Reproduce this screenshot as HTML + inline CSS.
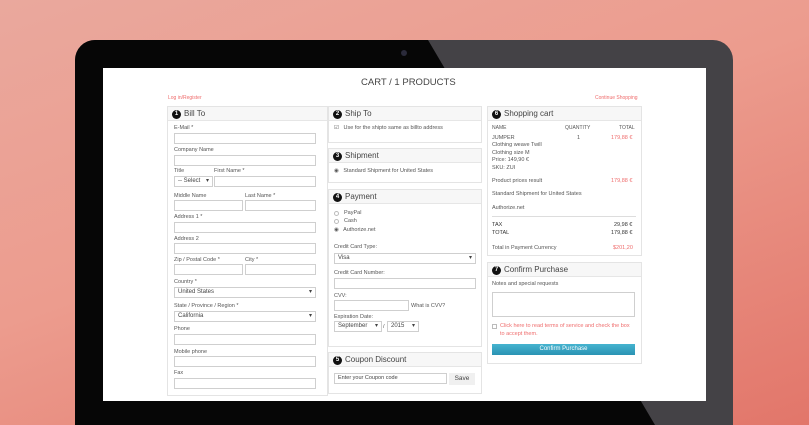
<!DOCTYPE html>
<html style="overflow:hidden;width:809px;height:425px"><head><meta charset="utf-8"><style>
*{margin:0;padding:0;box-sizing:border-box}
body{width:809px;height:425px;overflow:hidden;position:relative;font-family:"Liberation Sans",sans-serif;background:linear-gradient(160deg,#eaa89d 0%,#ec9c8e 45%,#e2766a 100%)}
.a{position:absolute}
.bez{left:75px;top:40px;width:658px;height:385px;border-radius:20px 20px 0 0;background:#444246;overflow:hidden}
.blk{left:0;top:0;width:658px;height:385px;background:#060606;clip-path:polygon(0 0,353px 0,580px 385px,0 385px)}
.scr{left:103px;top:68px;width:603px;height:333px;background:#fff}
.t{position:absolute;font-size:5.5px;color:#555;white-space:nowrap}
.box{position:absolute;border:1px solid #e4e4e4;background:#fff}
.hd{position:absolute;left:0;right:0;top:0;height:14px;background:#f7f7f7;border-bottom:1px solid #e6e6e6;font-size:8px;color:#444;line-height:14px;padding-left:16px}
.n{position:absolute;left:4px;top:2.5px;width:9px;height:9px;border-radius:50%;background:#111;color:#fff;font-size:6px;line-height:9px;text-align:center;font-weight:bold}
.in{position:absolute;border:1px solid #cfcfcf;background:#fff;height:11px;font-size:6px;color:#444;line-height:9px;padding-left:3px;overflow:hidden}
.sel::after{content:"▾";position:absolute;right:3px;top:0;font-size:6px}
.r{color:#ef6d6d}
.rd{position:absolute;width:5px;height:5px;border-radius:50%;border:1px solid #bbb}
</style></head><body>
<div class="a bez"><div class="a blk"></div></div>
<div class="a" style="left:401px;top:50px;width:6px;height:6px;border-radius:50%;background:#2a2a3a"></div>
<div class="a scr"></div>
<div class="t" style="left:361px;top:77px;font-size:9.5px;color:#444">CART / 1 PRODUCTS</div>
<div class="t r" style="left:168px;top:95px;font-size:5px">Log in/Register</div>
<div class="t r" style="left:595px;top:95px;font-size:5px">Continue Shopping</div>

<div class="box" style="left:167px;top:106px;width:161px;height:290px"><div class="hd"><span class="n">1</span>Bill To</div></div>
<div class="t" style="left:174px;top:125px">E-Mail *</div><div class="in" style="left:174px;top:133px;width:142px"></div>
<div class="t" style="left:174px;top:147px">Company Name</div><div class="in" style="left:174px;top:155px;width:142px"></div>
<div class="t" style="left:174px;top:168px">Title</div><div class="t" style="left:214px;top:168px">First Name *</div>
<div class="in sel" style="left:174px;top:176px;width:39px">-- Select</div><div class="in" style="left:214px;top:176px;width:102px"></div>
<div class="t" style="left:174px;top:193px">Middle Name</div><div class="t" style="left:245px;top:193px">Last Name *</div>
<div class="in" style="left:174px;top:200px;width:69px"></div><div class="in" style="left:245px;top:200px;width:71px"></div>
<div class="t" style="left:174px;top:214px">Address 1 *</div><div class="in" style="left:174px;top:222px;width:142px"></div>
<div class="t" style="left:174px;top:236px">Address 2</div><div class="in" style="left:174px;top:243px;width:142px"></div>
<div class="t" style="left:174px;top:257px">Zip / Postal Code *</div><div class="t" style="left:245px;top:257px">City *</div>
<div class="in" style="left:174px;top:264px;width:69px"></div><div class="in" style="left:245px;top:264px;width:71px"></div>
<div class="t" style="left:174px;top:279px">Country *</div><div class="in sel" style="left:174px;top:287px;width:142px">United States</div>
<div class="t" style="left:174px;top:303px">State / Province / Region *</div><div class="in sel" style="left:174px;top:311px;width:142px">California</div>
<div class="t" style="left:174px;top:326px">Phone</div><div class="in" style="left:174px;top:334px;width:142px"></div>
<div class="t" style="left:174px;top:349px">Mobile phone</div><div class="in" style="left:174px;top:356px;width:142px"></div>
<div class="t" style="left:174px;top:370px">Fax</div><div class="in" style="left:174px;top:378px;width:142px"></div>

<div class="box" style="left:328px;top:106px;width:154px;height:37px"><div class="hd"><span class="n">2</span>Ship To</div></div>
<div class="t" style="left:334px;top:125px">☑&nbsp;&nbsp; Use for the shipto same as billto address</div>
<div class="box" style="left:328px;top:148px;width:154px;height:35px"><div class="hd"><span class="n">3</span>Shipment</div></div>
<div class="t" style="left:334px;top:168px">◉&nbsp;&nbsp; Standard Shipment for United States</div>
<div class="box" style="left:328px;top:189px;width:154px;height:158px"><div class="hd"><span class="n">4</span>Payment</div></div>
<div class="rd" style="left:334px;top:211px"></div><div class="t" style="left:344px;top:210px">PayPal</div>
<div class="rd" style="left:334px;top:219px"></div><div class="t" style="left:344px;top:218px">Cash</div>
<div class="t" style="left:334px;top:227px">◉&nbsp;&nbsp; Authorize.net</div>
<div class="t" style="left:334px;top:244px">Credit Card Type:</div><div class="in sel" style="left:334px;top:253px;width:142px">Visa</div>
<div class="t" style="left:334px;top:270px">Credit Card Number:</div><div class="in" style="left:334px;top:278px;width:142px"></div>
<div class="t" style="left:334px;top:293px">CVV:</div><div class="in" style="left:334px;top:300px;width:75px"></div><div class="t" style="left:411px;top:303px">What is CVV?</div>
<div class="t" style="left:334px;top:314px">Expiration Date:</div>
<div class="in sel" style="left:334px;top:321px;width:48px">September</div><div class="t" style="left:383px;top:324px">/</div><div class="in sel" style="left:387px;top:321px;width:32px">2015</div>
<div class="box" style="left:328px;top:352px;width:154px;height:42px"><div class="hd"><span class="n">5</span>Coupon Discount</div></div>
<div class="in" style="left:334px;top:373px;width:113px;font-size:5.5px">Enter your Coupon code</div>
<div class="a" style="left:449px;top:373px;width:26px;height:12px;background:#f0f0f0;font-size:6.5px;color:#444;text-align:center;line-height:12px">Save</div>

<div class="box" style="left:487px;top:106px;width:155px;height:150px"><div class="hd"><span class="n">6</span>Shopping cart</div></div>
<div class="t" style="left:492px;top:125px;font-size:5px">NAME</div><div class="t" style="left:565px;top:125px;font-size:5px">QUANTITY</div><div class="t" style="left:619px;top:125px;font-size:5px">TOTAL</div>
<div class="t" style="left:492px;top:135px;line-height:7.4px">JUMPER<br>Clothing weave Twill<br>Clothing size M<br>Price: 149,90 €<br>SKU: ZUI</div>
<div class="t" style="left:577px;top:135px">1</div><div class="t r" style="left:611px;top:135px">179,88 €</div>
<div class="t" style="left:492px;top:178px">Product prices result</div><div class="t r" style="left:611px;top:178px">179,88 €</div>
<div class="t" style="left:492px;top:191px">Standard Shipment for United States</div>
<div class="t" style="left:492px;top:205px">Authorize.net</div>
<div class="a" style="left:492px;top:216px;width:144px;border-top:1px solid #ddd"></div>
<div class="t" style="left:492px;top:222px;color:#333">TAX</div><div class="t" style="left:614px;top:222px;color:#333">29,98 €</div>
<div class="t" style="left:492px;top:230px;color:#333">TOTAL</div><div class="t" style="left:611px;top:230px;color:#333">179,88 €</div>
<div class="t" style="left:492px;top:245px">Total in Payment Currency</div><div class="t r" style="left:613px;top:245px">$201,20</div>
<div class="box" style="left:487px;top:262px;width:155px;height:102px"><div class="hd"><span class="n">7</span>Confirm Purchase</div></div>
<div class="t" style="left:492px;top:281px">Notes and special requests</div>
<div class="in" style="left:492px;top:292px;width:143px;height:25px"></div>
<div class="a" style="left:492px;top:324px;width:5px;height:5px;border:1px solid #bbb"></div>
<div class="t r" style="left:500px;top:323px;line-height:7.5px">Click here to read terms of service and check the box<br>to accept them.</div>
<div class="a" style="left:492px;top:344px;width:143px;height:11px;background:linear-gradient(#45b3cf,#2a93b3);color:#fff;font-size:6px;text-align:center;line-height:11px">Confirm Purchase</div>
</body></html>
